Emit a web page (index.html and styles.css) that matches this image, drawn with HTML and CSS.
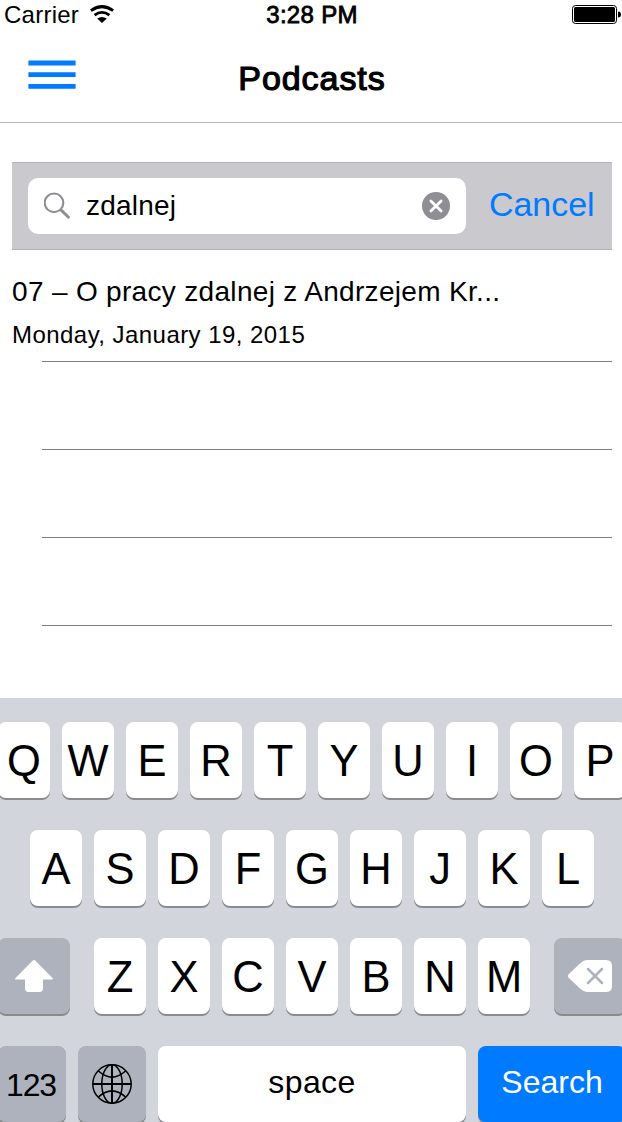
FILE: index.html
```html
<!DOCTYPE html>
<html lang="en">
<head>
<meta charset="utf-8">
<title>Podcasts</title>
<link rel="stylesheet" href="styles.css">
</head>
<body>
<div class="screen">
  <header class="status">
    <div class="network">
      <span class="carrier">Carrier</span>
      <svg class="wifi" width="24" height="18" viewBox="0 0 24 18"><path d="M0.9 5.6Q12-2.4 23.1 5.6" fill="none" stroke="#000" stroke-width="3"/><path d="M4.6 10.2Q12 4.6 19.4 10.2" fill="none" stroke="#000" stroke-width="2.8"/><path d="M7.2 13.6Q12 10.2 16.8 13.6L12 18Z"/></svg>
    </div>
    <span class="time">3:28 PM</span>
    <svg class="battery" width="50" height="20" viewBox="0 0 50 20"><rect x=".5" y=".5" width="44" height="18" rx="3" fill="#fff" stroke="#000"/><rect x="2" y="2" width="41" height="15" rx="1.5"/><path d="M46 6.5Q49 6.5 49 9.5T46 12.5Z"/></svg>
  </header>
  <nav class="nav">
    <svg class="menu" width="48" height="30" viewBox="0 0 48 30"><path d="M.4 3h47.2M.4 14.7h47.2M.4 26.4h47.2" stroke="#007aff" stroke-width="4.8"/></svg>
    <h1 class="title">Podcasts</h1>
  </nav>
  <main class="content">
    <div class="searchbar">
      <div class="field">
        <svg class="glass" width="28" height="28" viewBox="0 0 28 28" fill="none" stroke="#8e8e93"><circle cx="10" cy="10.8" r="9.3" stroke-width="2.1"/><path d="M16.6 17.6L25.3 26" stroke-width="3"/></svg>
        <span class="query">zdalnej</span>
        <svg class="clear" width="28" height="28" viewBox="0 0 28 28"><circle cx="14" cy="14" r="14" fill="#8e8e93"/><path d="M8.9 8.9L19.1 19.1M19.1 8.9L8.9 19.1" stroke="#fff" stroke-width="2.8" stroke-linecap="round"/></svg>
      </div>
      <span class="cancel">Cancel</span>
    </div>
    <article class="result">
      <div class="episode">07 – O pracy zdalnej z Andrzejem Kr...</div>
      <div class="date">Monday, January 19, 2015</div>
    </article>
    <div class="row"></div><div class="row"></div><div class="row"></div>
  </main>
  <section class="keyboard">
    <div class="keys top"><span class="key">Q</span><span class="key">W</span><span class="key">E</span><span class="key">R</span><span class="key">T</span><span class="key">Y</span><span class="key">U</span><span class="key">I</span><span class="key">O</span><span class="key">P</span></div>
    <div class="keys home"><span class="key">A</span><span class="key">S</span><span class="key">D</span><span class="key">F</span><span class="key">G</span><span class="key">H</span><span class="key">J</span><span class="key">K</span><span class="key">L</span></div>
    <div class="keys lower">
      <span class="key fn shift"><svg width="38" height="32" viewBox="0 0 38 32"><path d="M17.8.6Q19 -.4 20.2.6L37.5 18Q38.5 19.6 36.8 19.6H28V28Q28 32 24.5 32H13.5Q10 32 10 28V19.6H1.2Q-.5 19.6.5 18Z" fill="#fff"/></svg></span>
      <span class="key">Z</span><span class="key">X</span><span class="key">C</span><span class="key">V</span><span class="key">B</span><span class="key">N</span><span class="key">M</span>
      <span class="key fn delete"><svg width="44" height="32" viewBox="0 0 44 32"><path d="M.7 14.2L12.5 3Q16 0 19 0H38Q44 0 44 6V26Q44 32 38 32H19Q16 32 12.5 29L.7 17.8Q-.8 16 .7 14.2Z" fill="#fff"/><path d="M20 9L34 23M34 9L20 23" stroke="#aeb2bd" stroke-width="2.5" stroke-linecap="round"/></svg></span>
    </div>
    <div class="keys bottom">
      <span class="key fn numbers">123</span>
      <span class="key fn globe"><svg width="40" height="40" viewBox="0 0 40 40" fill="none" stroke="#000" stroke-width="1.5"><circle cx="20" cy="20" r="19.2"/><ellipse cx="20" cy="20" rx="10.2" ry="19.2"/><path d="M6.2 6.8Q20 19.5 33.8 6.8M6.2 33.2Q20 20.5 33.8 33.2"/><path d="M20 1V39M1 20H39" stroke-width="2"/></svg></span>
      <span class="key space">space</span>
      <span class="key search">Search</span>
    </div>
  </section>
</div>
</body>
</html>
```
FILE: styles.css
```css
* { box-sizing: border-box; }
body { margin: 0; background: #fff; color: #000; font-family: "Liberation Sans", Arial, sans-serif; }
svg { display: block; flex: none; }
.screen { width: 622px; height: 1122px; overflow: hidden; display: flex; flex-direction: column; }
.status { height: 30px; display: grid; grid-template-columns: 1fr auto 1fr; font-size: 24px; line-height: 30px; }
.network { display: flex; padding-left: 4px; gap: 11px; }
.carrier { letter-spacing: .25px; }
.wifi { margin-top: 5px; }
.time { padding-left: 2px; letter-spacing: .3px; -webkit-text-stroke: .8px #000; }
.battery { justify-self: end; margin-top: 5px; }
.nav { height: 93px; border-bottom: 1px solid #b2b2b2; display: grid; grid-template-columns: 1fr auto 1fr; }
.menu { margin: 30px 0 0 28px; }
.title { margin: 28px 0 0; padding-left: 2px; font-size: 34px; line-height: 40px; font-weight: 400; letter-spacing: .95px; -webkit-text-stroke: 1.2px #000; }
.content { flex: 1; padding: 39px 10px 0 12px; }
.searchbar { height: 88px; padding: 0 16px; border-top: 1px solid #b2b2b5; border-bottom: 1px solid #b2b2b5; background: #c9c9ce; display: flex; align-items: center; }
.field { width: 438px; height: 56px; border-radius: 10px; background: #fff; padding: 0 16px; display: flex; align-items: center; }
.query { flex: 1; padding: 0 0 0 14px; font-size: 28px; letter-spacing: .2px; }
.cancel { margin-left: 23px; padding-bottom: 4px; color: #007aff; font-size: 34px; letter-spacing: -.05px; }
.result { height: 112px; padding-top: 24px; white-space: nowrap; }
.episode { font-size: 28px; line-height: 36px; letter-spacing: .32px; }
.date { margin-top: 9px; font-size: 24px; line-height: 32px; letter-spacing: .45px; }
.result::after { content: ""; display: block; height: 1px; margin: 10px 0 0 30px; background: #7f7f7f; }
.row { height: 88px; margin-left: 30px; border-bottom: 1px solid #7f7f7f; }
.keyboard { height: 424px; padding-top: 24px; background: #d2d5dc; display: flex; flex-direction: column; gap: 32px; flex: none; }
.keys { display: flex; gap: 12px; height: 76px; margin-left: -2px; }
.home { margin-left: 30px; }
.key { flex: none; width: 52px; height: 76px; padding-top: 2px; border-radius: 8px; background: #fff; box-shadow: 0 2px 0 #898b8f; display: flex; align-items: center; justify-content: center; font-size: 43.5px; line-height: 50px; }
.fn { background: #aeb2bd; }
.shift { width: 72px; margin-right: 12px; }
.delete { width: 72px; margin-left: 12px; }
.shift, .delete, .globe { padding-top: 0; }
.numbers { width: 68px; font-size: 32px; letter-spacing: -1.2px; padding-right: 2px; }
.globe { width: 68px; }
.space { width: 308px; font-size: 32px; letter-spacing: .4px; padding: 0 0 4px; }
.search { width: 148px; font-size: 32px; padding: 0 0 4px; background: #007aff; color: #fff; }
```
